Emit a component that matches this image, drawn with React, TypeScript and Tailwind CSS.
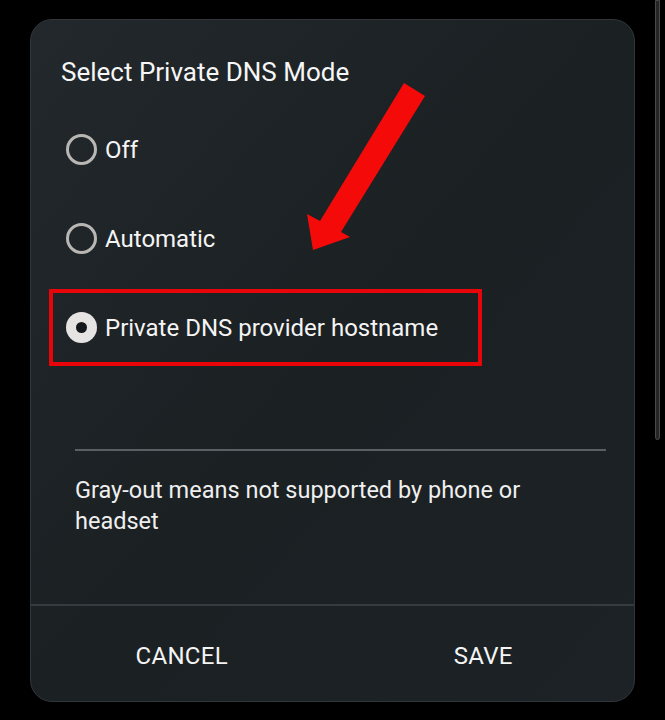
const font = { fontFamily: "Roboto, 'Open Sans', sans-serif" };

function Radio({ checked }: { checked?: boolean }) {
  if (checked) {
    return (
      <span className="flex h-[31px] w-[31px] shrink-0 items-center justify-center rounded-full bg-[#e6e4e2]">
        <span className="h-[11px] w-[11px] rounded-full bg-[#16191b]" />
      </span>
    );
  }
  return <span className="h-[31px] w-[31px] shrink-0 rounded-full border-[3.5px] border-[#b9b7b4]" />;
}

function Option({ label, checked }: { label: string; checked?: boolean }) {
  return (
    <div className="flex items-center gap-[8px]">
      <Radio checked={checked} />
      <span className="text-[24px] leading-[32px] text-[#f4f4f4]">{label}</span>
    </div>
  );
}

export default function App() {
  return (
    <div className="relative h-[720px] w-[665px] overflow-hidden bg-black" style={font}>
      <div className="flex items-start">
        <div className="ml-[30px] mt-[19px] flex h-[683px] w-[605px] flex-col rounded-[22px] border border-[#30363a] bg-gradient-to-br from-[#22282b] via-[#1b2023] to-[#1c2225]">
          <h1 className="ml-[30px] mt-[36px] text-[26px] leading-[32px] font-normal text-[#f6f6f6]">
            Select Private DNS Mode
          </h1>

          <div className="mt-[17px] flex flex-col">
            <div className="flex h-[89px] items-center pl-[35px]">
              <Option label="Off" />
            </div>
            <div className="flex h-[89px] items-center pl-[35px]">
              <Option label="Automatic" />
            </div>
            <div className="flex h-[89px] items-center pl-[18px]">
              <div className="flex h-[77px] w-[433px] items-center border-[4px] border-[#e8050a] pl-[13px]">
                <Option label="Private DNS provider hostname" checked />
              </div>
            </div>
          </div>

          <div className="ml-[44px] mr-[28px] h-[79px] border-b-2 border-[#595f62]" />

          <p className="ml-[44px] mt-[24px] w-[480px] text-[23.5px] leading-[31px] text-[#efefef]">
            Gray-out means not supported by phone or headset
          </p>

          <div className="mt-auto flex h-[97px] border-t-2 border-[#353b3e]">
            <button className="flex-1 pt-[4px] text-[24px] tracking-[0.3px] text-[#f4f4f4]">CANCEL</button>
            <button className="flex-1 pt-[4px] text-[24px] tracking-[0.3px] text-[#f4f4f4]">SAVE</button>
          </div>
        </div>

        <div className="ml-[20px] h-[440px] w-[5px] rounded-b-full border border-[#4a4a4a] bg-[#262626]" />
      </div>

      <svg
        className="pointer-events-none absolute inset-0"
        width="665"
        height="720"
        viewBox="0 0 665 720"
      >
        <polygon
          points="404,83 425,96 341,232 350,237 313,250 307,214 320,221"
          fill="#f50a0a"
        />
      </svg>
    </div>
  );
}
